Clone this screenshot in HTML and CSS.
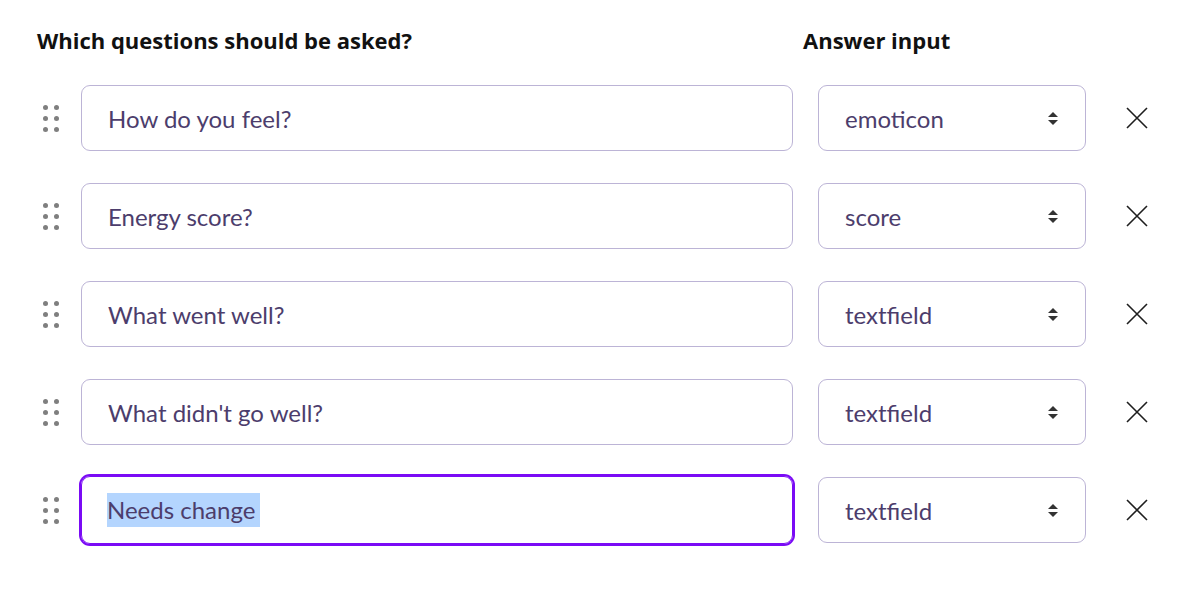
FILE: index.html
```html
<!DOCTYPE html>
<html lang="en">
<head>
<meta charset="utf-8">
<title>Questions</title>
<link rel="stylesheet" href="styles.css">
</head>
<body>
<div class="page">
  <div class="heads">
    <h2 class="head head-q">Which questions should be asked?</h2>
    <h2 class="head head-a">Answer input</h2>
  </div>
  <div class="rows">
    <div class="row">
      <span class="handle"><i></i><i></i><i></i><i></i><i></i><i></i></span>
      <div class="field">How do you feel?</div>
      <div class="select"><span>emoticon</span><span class="arrows"><b class="up"></b><b class="down"></b></span></div>
      <span class="remove"><svg viewBox="0 0 22 22" width="22" height="22"><path d="M1 1L21 21M21 1L1 21" stroke="#1e1e1e" stroke-width="1.6" fill="none"/></svg></span>
    </div>
    <div class="row">
      <span class="handle"><i></i><i></i><i></i><i></i><i></i><i></i></span>
      <div class="field">Energy score?</div>
      <div class="select"><span>score</span><span class="arrows"><b class="up"></b><b class="down"></b></span></div>
      <span class="remove"><svg viewBox="0 0 22 22" width="22" height="22"><path d="M1 1L21 21M21 1L1 21" stroke="#1e1e1e" stroke-width="1.6" fill="none"/></svg></span>
    </div>
    <div class="row">
      <span class="handle"><i></i><i></i><i></i><i></i><i></i><i></i></span>
      <div class="field">What went well?</div>
      <div class="select"><span>textfield</span><span class="arrows"><b class="up"></b><b class="down"></b></span></div>
      <span class="remove"><svg viewBox="0 0 22 22" width="22" height="22"><path d="M1 1L21 21M21 1L1 21" stroke="#1e1e1e" stroke-width="1.6" fill="none"/></svg></span>
    </div>
    <div class="row">
      <span class="handle"><i></i><i></i><i></i><i></i><i></i><i></i></span>
      <div class="field">What didn't go well?</div>
      <div class="select"><span>textfield</span><span class="arrows"><b class="up"></b><b class="down"></b></span></div>
      <span class="remove"><svg viewBox="0 0 22 22" width="22" height="22"><path d="M1 1L21 21M21 1L1 21" stroke="#1e1e1e" stroke-width="1.6" fill="none"/></svg></span>
    </div>
    <div class="row">
      <span class="handle"><i></i><i></i><i></i><i></i><i></i><i></i></span>
      <div class="field focused"><span class="sel">Needs change</span></div>
      <div class="select"><span>textfield</span><span class="arrows"><b class="up"></b><b class="down"></b></span></div>
      <span class="remove"><svg viewBox="0 0 22 22" width="22" height="22"><path d="M1 1L21 21M21 1L1 21" stroke="#1e1e1e" stroke-width="1.6" fill="none"/></svg></span>
    </div>
  </div>
</div>
</body>
</html>
```
FILE: styles.css
```css
* { box-sizing: border-box; }
html, body { margin: 0; padding: 0; background: #fff; }
body { font-family: Lato, "Noto Sans", sans-serif; }
.page { padding: 26px 0 56px 0; }
.heads { display: flex; padding-left: 37px; }
.head { margin: 0; font-family: "Open Sans", Lato, sans-serif; font-size: 22px; font-weight: 700; color: #111; line-height: 28px; }
.head-q { width: 766px; }
.rows { display: flex; flex-direction: column; gap: 32px; margin-top: 31px; padding-left: 43px; }
.row { display: flex; align-items: center; min-height: 66px; }
.handle { display: grid; grid-template-columns: 5px 5px; gap: 6px 6px; width: 16px; margin-right: 22px; }
.handle i { width: 5px; height: 5px; border-radius: 50%; background: #7f7f7f; display: block; }
.field, .select { height: 66px; border: 1px solid #bcb4d6; border-radius: 9px; display: flex; align-items: center; padding-left: 26px; font-size: 24px; color: #4c3d6c; }
.field { width: 712px; }
.field.focused { border-color: #7a0af5; box-shadow: 0 0 0 2px #7a0af5; margin: -1px 0; height: 68px; }
.sel { background: #b4d5fe; line-height: 34px; padding: 0 5px 0 0; margin-left: -1px; }
.select { width: 268px; margin-left: 25px; justify-content: space-between; padding-right: 27px; }
.arrows { display: flex; flex-direction: column; gap: 3px; }
.arrows b { display: block; width: 0; height: 0; border-left: 5px solid transparent; border-right: 5px solid transparent; }
.arrows .up { border-bottom: 5px solid #333; }
.arrows .down { border-top: 5px solid #333; }
.remove { margin-left: 40px; width: 22px; height: 22px; display: block; }
.remove svg { display: block; }
```
